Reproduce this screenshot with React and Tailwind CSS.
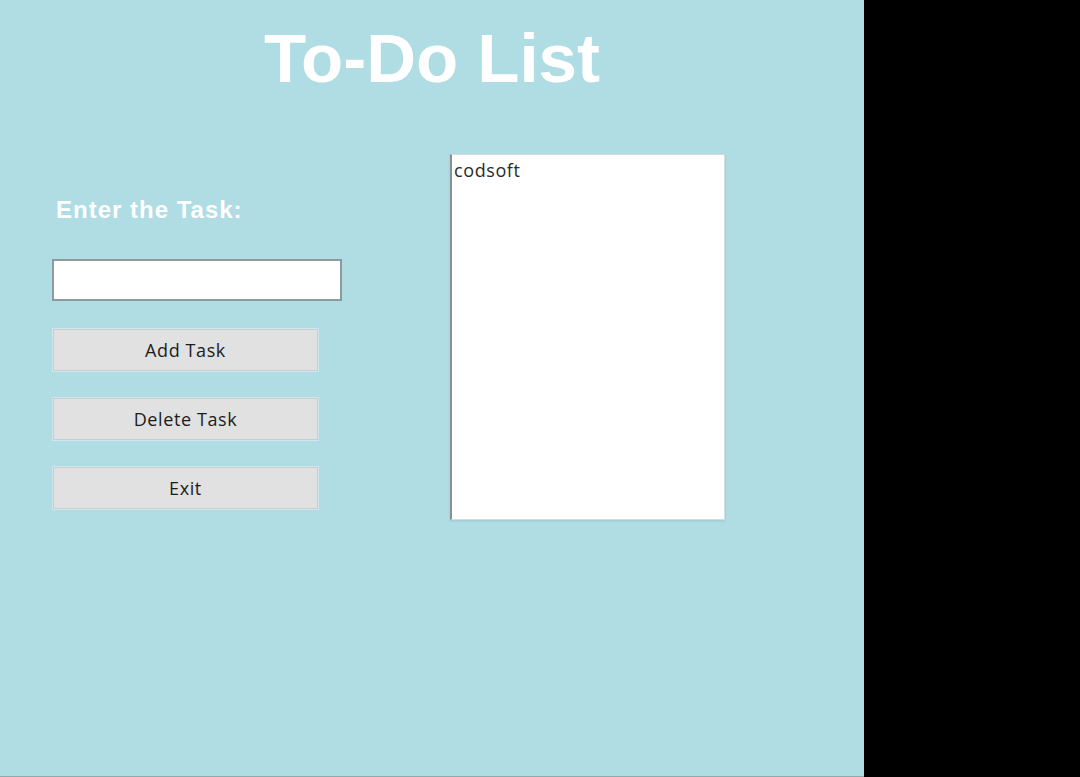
import React from "react";

function TkButton({ label }) {
  return (
    <button className="w-[265px] h-[42px] bg-[#e1e1e1] border border-[#c9cdce] shadow-[0_0_0_1px_#cfe7ec] flex items-center justify-center text-[18px] tracking-[0.6px] text-[#1c1c1c] font-['Open_Sans',sans-serif]">
      {label}
    </button>
  );
}

export default function App() {
  return (
    <div className="flex w-[1080px] h-[777px] bg-black overflow-hidden">
      <div className="w-[864px] h-full bg-[#b0dce3] border-b border-[#8fa9ad] flex flex-col">
        <h1 className="text-center text-white font-bold text-[69px] leading-none mt-[24px] font-['Liberation_Sans',Arial,sans-serif]">
          To-Do List
        </h1>

        <div className="flex mt-[61px]">
          <div className="flex flex-col w-[450px] pl-[52px] pt-[44px]">
            <label className="text-white font-bold text-[24px] leading-none ml-[4px] tracking-[1px] font-['Liberation_Sans',Arial,sans-serif]">
              Enter the Task:
            </label>
            <input
              className="mt-[37px] w-[290px] h-[42px] bg-white border-2 border-[#8d9b9d] outline-none"
              defaultValue=""
            />
            <div className="flex flex-col gap-[27px] mt-[28px] ml-[1px]">
              <TkButton label="Add Task" />
              <TkButton label="Delete Task" />
              <TkButton label="Exit" />
            </div>
          </div>

          <div className="w-[275px] h-[366px] bg-white border border-[#d6dcdd] border-l-2 border-l-[#8a8f90] shadow-[0_1px_2px_#9ec8cf]">
            <div className="pl-[2px] pt-[4px] text-[18px] leading-[22px] tracking-[0.6px] text-[#2a2a2a] font-['Open_Sans',sans-serif]">
              codsoft
            </div>
          </div>
        </div>
      </div>
    </div>
  );
}
